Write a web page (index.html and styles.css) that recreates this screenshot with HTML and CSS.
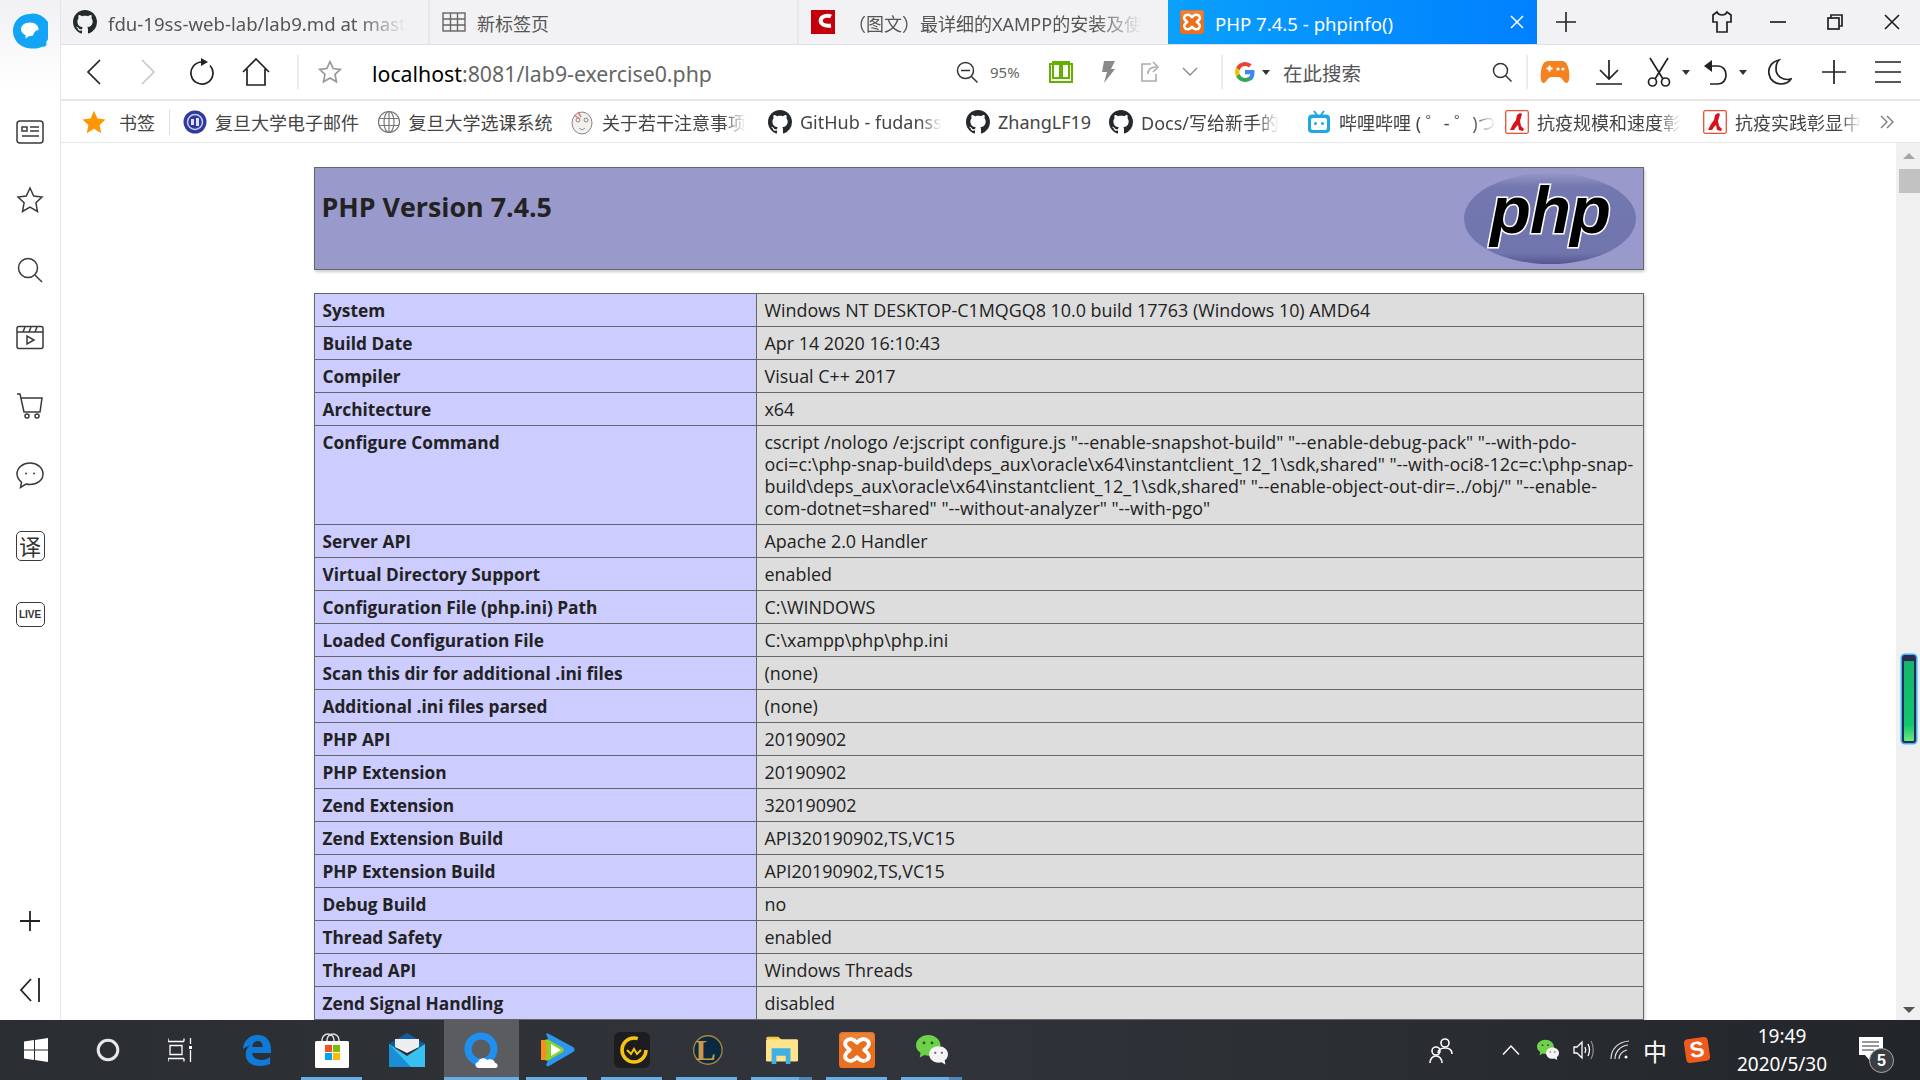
FILE: index.html
```html
<!DOCTYPE html>
<html lang="zh-CN">
<head>
<meta charset="utf-8">
<title>PHP 7.4.5 - phpinfo()</title>
<link rel="stylesheet" href="styles.css">
</head>
<body>
<svg class="defs" width="0" height="0" aria-hidden="true">
  <symbol id="gh" viewBox="0 0 16 16"><path fill="#24292e" d="M8 0C3.58 0 0 3.58 0 8c0 3.54 2.29 6.53 5.47 7.59.4.07.55-.17.55-.38 0-.19-.01-.82-.01-1.49-2.01.37-2.53-.49-2.69-.94-.09-.23-.48-.94-.82-1.13-.28-.15-.68-.52-.01-.53.63-.01 1.08.58 1.23.82.72 1.21 1.87.87 2.33.66.07-.52.28-.87.51-1.07-1.78-.2-3.64-.89-3.64-3.95 0-.87.31-1.59.82-2.15-.08-.2-.36-1.02.08-2.12 0 0 .67-.21 2.2.82.64-.18 1.32-.27 2-.27.68 0 1.36.09 2 .27 1.53-1.04 2.2-.82 2.2-.82.44 1.1.16 1.92.08 2.12.51.56.82 1.27.82 2.15 0 3.07-1.87 3.75-3.65 3.95.29.25.54.73.54 1.48 0 1.07-.01 1.93-.01 2.2 0 .21.15.46.55.38A8.013 8.013 0 0016 8c0-4.42-3.58-8-8-8z"/></symbol>
  <symbol id="xampp" viewBox="0 0 30 30"><rect width="30" height="30" rx="3" fill="#e8701f"/><rect x="1" y="1" width="28" height="7" rx="2" fill="#f09a5c" opacity=".45"/><path fill="none" stroke="#fff" stroke-width="3.200" stroke-linejoin="round" d="M6 7.500c2.500-2.500 6-2 9 1.500 3-3.500 6.500-4 9-1.500 2.500 2.800-.5 5.500-3 7.500 2.500 2 5.500 4.700 3 7.500-2.500 2.500-6 2-9-1.500-3 3.500-6.500 4-9 1.500-2.500-2.800.5-5.500 3-7.500-2.500-2-5.500-4.700-3-7.500z"/></symbol>
  <symbol id="red" viewBox="0 0 24 24"><rect x=".7" y=".7" width="22.600" height="22.600" rx="1.500" fill="#fff" stroke="#e8512f" stroke-width="1.300"/><path fill="#d8121c" d="M15 3l2 1-2 7 1 5 3 3-1 2-4-1-1-5-2 2-2 3H5l3-6 3-4 1-5z"/></symbol>
  <symbol id="caret" viewBox="0 0 8 5"><path fill="#333" d="M0 0h8L4 5z"/></symbol>
  <symbol id="wc" viewBox="0 0 36 34"><path fill="#6fd04a" d="M14 1c7 0 13 4.500 13 11s-6 11-13 11c-1.500 0-2.800-.2-4-.6L5 25l.8-5C2.800 18 1 15.200 1 12 1 5.500 7 1 14 1z"/><circle cx="9.500" cy="9.500" r="1.500" fill="#1d5c1a"/><circle cx="18" cy="9.500" r="1.500" fill="#1d5c1a"/><path fill="#f4f4f4" d="M25 13c5.500 0 10 3.700 10 8.500 0 2.700-1.400 5-3.500 6.500l.7 4.500-4.200-2.400c-1 .2-2 .4-3 .4-5.500 0-10-3.700-10-9s4.500-8.500 10-8.500z"/><circle cx="21.500" cy="20" r="1.200" fill="#666"/><circle cx="28.500" cy="20" r="1.200" fill="#666"/></symbol>
</svg>

<div class="app">
  <aside class="side">
    <svg class="logo" width="36" height="36" viewBox="0 0 38 38"><path fill="#12a5f5" d="M19 1a18 18 0 0 0-5 35.300c5 1.500 13 1.700 18-.8 3.500 1 5.500-2 4-5A18 18 0 0 0 19 1z"/><path fill="#fff" d="M19 10c5.500 0 9.500 3.500 9 8-3.500.5-5 2.500-5.500 5.500-1.500.8-3 1-4.500 1l-4 2.500.5-3.500C11.500 22.500 9.500 20 9.500 17.500 9.500 13 13.500 10 19 10z"/></svg>
    <nav class="side-list">
      <svg width="28" height="26" viewBox="0 0 28 26" class="si"><rect x="1" y="2" width="26" height="22" rx="3"/><rect x="6" y="8" width="5" height="4"/><path d="M14 8h9M14 12h9M6 17h17"/></svg>
      <svg width="28" height="28" viewBox="0 0 28 28" class="si"><path d="M14 2l3.700 8 8.300 1-6.100 5.800 1.600 8.700L14 21l-7.500 4.500 1.600-8.700L2 11l8.300-1z"/></svg>
      <svg width="28" height="28" viewBox="0 0 28 28" class="si"><circle cx="12" cy="12" r="9.500"/><path d="M19 19l7 7"/></svg>
      <svg width="28" height="26" viewBox="0 0 28 26" class="si"><rect x="1" y="1.500" width="26" height="22" rx="2"/><path d="M1 7h26M7 7l2-5M13 7l2-5M19 7l2-5M11 11v8l7-4z"/></svg>
      <svg width="28" height="28" viewBox="0 0 28 28" class="si"><path d="M1 2h3l4 18h16l2-14H5"/><circle cx="11" cy="24" r="2"/><circle cx="21" cy="24" r="2"/></svg>
      <svg width="28" height="28" viewBox="0 0 28 28" class="si"><path d="M14 2c7 0 13 4.500 13 11s-6 10.500-13 10.500c-1.500 0-3-.2-4-.5l-5.500 3.500 1-5.500C3 19 1 16 1 13 1 6.500 7 2 14 2z"/><circle class="dot" cx="10" cy="12.500" r="1"/><circle class="dot" cx="18" cy="12.500" r="1"/></svg>
      <div class="box-icon box-yi">译</div>
      <div class="box-icon box-live">LIVE</div>
    </nav>
    <div class="side-bottom">
      <svg width="24" height="24" viewBox="0 0 24 24" class="si si-dark"><path d="M12 2v20M2 12h20"/></svg>
      <svg width="24" height="28" viewBox="0 0 24 28" class="si si-dark"><path d="M13 3L3 14l10 11M21 2v24"/></svg>
    </div>
  </aside>

  <div class="browser">
    <div class="tabs">
      <div class="tab tab-sep"><svg width="24" height="24"><use href="#gh"/></svg><span class="tab-label latin fade">fdu-19ss-web-lab/lab9.md at mast</span></div>
      <div class="tab tab-sep"><svg width="24" height="22" viewBox="0 0 24 22" class="grid-ico"><rect x="1" y="2" width="22" height="18"/><path d="M1 8h22M1 14h22M8.500 2v18M15.500 2v18"/></svg><span class="tab-label">新标签页</span></div>
      <div class="tab"><svg width="24" height="24" viewBox="0 0 24 24"><rect width="24" height="24" fill="#c4000a"/><path fill="none" stroke="#fff" stroke-width="4" d="M20 6.500c-2-1-8-1.500-10 2.500-1.500 4.500 3 7.500 10 6.500"/></svg><span class="tab-label fade tab-indent">（图文）最详细的XAMPP的安装及使</span></div>
      <div class="tab tab-active"><svg width="24" height="24"><use href="#xampp"/></svg><span class="tab-label latin">PHP 7.4.5 - phpinfo()</span><svg class="tab-x" width="14" height="14" viewBox="0 0 14 14"><path d="M1 1l12 12M13 1L1 13" stroke="#fff" stroke-width="1.500"/></svg></div>
      <div class="tab-tail">
        <svg class="tab-plus" width="22" height="22" viewBox="0 0 22 22"><path d="M11 1v20M1 11h20" stroke="#222" stroke-width="1.600"/></svg>
        <div class="win-btns">
          <svg width="22" height="24" viewBox="0 0 22 24" class="ci shirt"><path d="M6 2l-4 3v7h4v10h10V12h4V5l-4-3c-1 2.500-3 3-5 3S7 4.500 6 2z"/></svg>
          <svg width="16" height="4" viewBox="0 0 16 4" class="ci"><path d="M0 2h16"/></svg>
          <svg width="16" height="16" viewBox="0 0 16 16" class="ci"><rect x="1" y="4" width="11" height="11"/><path d="M4 4V1h11v11h-3"/></svg>
          <svg width="16" height="16" viewBox="0 0 16 16" class="ci"><path d="M1 1l14 14M15 1L1 15"/></svg>
        </div>
      </div>
    </div>

    <div class="toolbar">
      <div class="tool"><svg width="16" height="26" viewBox="0 0 16 26" class="ci"><path d="M14 1L2 13l12 12"/></svg></div>
      <div class="tool"><svg width="16" height="26" viewBox="0 0 16 26" class="ci faint"><path d="M2 1l12 12L2 25"/></svg></div>
      <div class="tool"><svg width="26" height="28" viewBox="0 0 26 28" class="ci"><path d="M21 7.500A11 11 0 1 1 13 4"/><path class="fill" d="M12 0l7 4-7 4z"/></svg></div>
      <div class="tool"><svg width="28" height="28" viewBox="0 0 28 28" class="ci"><path d="M1 14L14 1l13 13M5 11v16h18V11"/></svg></div>
      <div class="tb-sep tb-sep-left"></div>
      <svg class="addr-star" width="24" height="24" viewBox="0 0 28 28"><path d="M14 2l3.700 8 8.300 1-6.100 5.800 1.600 8.700L14 21l-7.500 4.500 1.600-8.700L2 11l8.300-1z" fill="none" stroke="#999" stroke-width="2"/></svg>
      <div class="url"><b>localhost</b>:8081/lab9-exercise0.php</div>
      <div class="zoom-group">
        <svg width="22" height="22" viewBox="0 0 22 22" class="ci thin"><circle cx="9.500" cy="9.500" r="8"/><path d="M5 9.500h9M15.500 15.500l6 6"/></svg>
        <span class="zoom-val">95%</span>
        <svg class="book" width="24" height="22" viewBox="0 0 24 22"><path d="M1 3h22v18H1zM4 1h7v16H4zM13 1h7v16h-7z" fill="none" stroke="#62b000" stroke-width="2"/></svg>
        <svg class="flash" width="16" height="24" viewBox="0 0 16 24"><path fill="#8a8a8a" d="M4 1h11l-4 8h4L4 23l3-11H2z"/></svg>
        <svg class="share" width="20" height="22" viewBox="0 0 20 22"><path d="M11 3H2v17h14v-7M8 13c0-5 3-7 8-7M13 1l5 5-5 5" fill="none" stroke="#aaa" stroke-width="1.600"/></svg>
        <svg class="chev" width="16" height="10" viewBox="0 0 16 10"><path d="M1 1l7 7 7-7" fill="none" stroke="#888" stroke-width="1.400"/></svg>
      </div>
      <div class="tb-sep"></div>
      <div class="search-group">
        <svg width="24" height="24" viewBox="0 0 24 24" class="g"><path d="M21.500 12.200c0-.8-.1-1.500-.2-2.200H12v4.300h5.300c-.2 1.300-1 2.500-2.100 3.200v2.700h3.400c2-1.800 2.900-4.700 2.900-8z" fill="#4285f4"/><path d="M12 22c2.700 0 5-.9 6.600-2.400l-3.400-2.700c-.9.600-2 1-3.200 1-2.500 0-4.600-1.700-5.400-4H3.200v2.700C4.800 19.800 8.100 22 12 22z" fill="#34a853"/><path d="M6.600 13.900c-.4-1.200-.4-2.600 0-3.800V7.400H3.200a10 10 0 0 0 0 9.200z" fill="#fbbc05"/><path d="M12 6c1.500 0 2.700.5 3.800 1.500l2.800-2.900A10 10 0 0 0 3.200 7.400l3.400 2.700C7.400 7.700 9.500 6 12 6z" fill="#ea4335"/></svg>
        <svg class="g-caret" width="8" height="5"><use href="#caret"/></svg>
        <span class="search-text">在此搜索</span>
        <svg class="search-ico ci thin" width="20" height="20" viewBox="0 0 20 20"><circle cx="8.500" cy="8.500" r="7"/><path d="M13.500 13.500l6 6"/></svg>
      </div>
      <div class="tb-sep"></div>
      <div class="tool game"><svg width="30" height="26" viewBox="0 0 30 26"><path fill="#f58220" d="M8 2h14c4 0 6 4 7 10 1 7 0 12-2.500 12-2.500 0-4-5-7.500-6h-8c-3.500 1-5 6-7.500 6S0 19 1 12C2 6 4 2 8 2z"/><path d="M6.500 9.500h6M9.500 6.500v6" stroke="#fff" stroke-width="2"/><circle cx="18" cy="10" r="1.600" fill="#fff"/><circle cx="23" cy="10" r="1.600" fill="#fff"/></svg></div>
      <div class="tool"><svg width="26" height="26" viewBox="0 0 26 26" class="ci"><path d="M13 1v18M4 11l9 9 9-9M0 25h26"/></svg></div>
      <div class="tool tool-split tool-cut"><svg width="24" height="30" viewBox="0 0 24 30" class="ci"><path d="M3 1l13 21M21 1L8 22"/><circle cx="5.500" cy="25" r="4"/><circle cx="18.500" cy="25" r="4"/></svg><svg width="8" height="5"><use href="#caret"/></svg></div>
      <div class="tool tool-split tool-undo"><svg width="24" height="26" viewBox="0 0 24 26" class="ci"><path d="M5 7h9c5 0 8 4 8 9s-3 9-8 9H6"/><path class="fill" d="M8 1v12L0 7z"/></svg><svg width="8" height="5"><use href="#caret"/></svg></div>
      <div class="tool"><svg width="24" height="26" viewBox="0 0 24 26" class="ci"><path d="M11 1C3 3 0 9 1 15c1 6 6 10 12 10 4 0 8-2 10-5-8 2-15-3-15-10 0-4 1-7 3-9z"/></svg></div>
      <div class="tool"><svg width="24" height="24" viewBox="0 0 24 24" class="ci"><path d="M12 0v24M0 12h24"/></svg></div>
      <div class="tool"><svg width="26" height="22" viewBox="0 0 26 22" class="ci"><path d="M0 1h26M0 11h26M0 21h26"/></svg></div>
    </div>

    <div class="bookmarks">
      <svg class="bm-star" width="24" height="24" viewBox="0 0 28 28"><path fill="#ff9500" d="M14 1l4 9 9.500 1-7 6.500 2 9.500-8.500-5-8.500 5 2-9.500-7-6.500L10 10z"/></svg>
      <span class="bm-folder">书签</span>
      <div class="bm-sep"></div>
      <div class="bm bm-mid"><svg width="24" height="24" viewBox="0 0 24 24"><circle cx="12" cy="12" r="11.500" fill="#2f3a9e"/><circle cx="12" cy="12" r="7.500" fill="none" stroke="#c9cdf0" stroke-width="1.500"/><path d="M8 9h3v6H8zM13 8h3v8h-3z" fill="#dfe1f7"/></svg><span class="bm-label">复旦大学电子邮件</span></div>
      <div class="bm bm-mid"><svg width="24" height="24" viewBox="0 0 24 24" fill="none" stroke="#777" stroke-width="1.200"><circle cx="12" cy="12" r="10.500"/><ellipse cx="12" cy="12" rx="5" ry="10.500"/><path d="M12 1.500v21M2 8.500h20M2 15.500h20"/></svg><span class="bm-label">复旦大学选课系统</span></div>
      <div class="bm bm-wide"><svg width="24" height="26" viewBox="0 0 24 26" fill="none" stroke="#888" stroke-width="1"><ellipse cx="12" cy="14" rx="10" ry="11" fill="#f4f0ee"/><circle cx="8" cy="11" r="2"/><circle cx="16" cy="11" r="2"/><path d="M9 19c2 2 4 2 6 0"/><path d="M4 6l6 4M8 3l3 5" stroke="#d88080" stroke-width="1.500"/></svg><span class="bm-label fade">关于若干注意事项</span></div>
      <div class="bm bm-wide"><svg width="24" height="24"><use href="#gh"/></svg><span class="bm-label fade">GitHub - fudanss</span></div>
      <div class="bm bm-short"><svg width="24" height="24"><use href="#gh"/></svg><span class="bm-label">ZhangLF19</span></div>
      <div class="bm bm-wide"><svg width="24" height="24"><use href="#gh"/></svg><span class="bm-label fade">Docs/写给新手的</span></div>
      <div class="bm bm-wide"><svg width="24" height="24" viewBox="0 0 24 24"><path d="M7 1l3 4M17 1l-3 4" stroke="#20a8e0" stroke-width="2"/><rect x="1" y="4.500" width="22" height="18.500" rx="4" fill="#20a8e0"/><rect x="4" y="8" width="16" height="12" rx="2" fill="#fff"/><circle cx="8.500" cy="13.500" r="1.500" fill="#20a8e0"/><circle cx="15.500" cy="13.500" r="1.500" fill="#20a8e0"/></svg><span class="bm-label fade">哔哩哔哩 ( ゜- ゜)つ</span></div>
      <div class="bm bm-wide"><svg width="24" height="24"><use href="#red"/></svg><span class="bm-label fade">抗疫规模和速度彰</span></div>
      <div class="bm bm-last"><svg width="24" height="24"><use href="#red"/></svg><span class="bm-label fade">抗疫实践彰显中</span></div>
      <svg class="bm-more" width="14" height="14" viewBox="0 0 14 14" fill="none" stroke="#777" stroke-width="1.300"><path d="M1 1l6 6-6 6M7 1l6 6-6 6"/></svg>
    </div>

    <div class="viewport">
      <main class="page">
        <header class="php-head">
          <h1>PHP Version 7.4.5</h1>
          <svg class="php-logo" width="172" height="91" viewBox="0 0 172 91">
            <defs>
              <linearGradient id="ph" x1="0" y1="0" x2="0" y2="1"><stop offset="0" stop-color="#9497c6"/><stop offset=".15" stop-color="#7478b0"/><stop offset=".88" stop-color="#7175ae"/><stop offset="1" stop-color="#54568f"/></linearGradient>
            </defs>
            <ellipse cx="86" cy="45.500" rx="86" ry="45.500" fill="url(#ph)"/>
            <text class="php-word" x="86" y="60" text-anchor="middle">php</text>
          </svg>
        </header>
        <table class="info">
          <tbody>
            <tr><th>System</th><td>Windows NT DESKTOP-C1MQGQ8 10.0 build 17763 (Windows 10) AMD64</td></tr>
            <tr><th>Build Date</th><td>Apr 14 2020 16:10:43</td></tr>
            <tr><th>Compiler</th><td>Visual C++ 2017</td></tr>
            <tr><th>Architecture</th><td>x64</td></tr>
            <tr><th>Configure Command</th><td>cscript /nologo /e:jscript configure.js "--enable-snapshot-build" "--enable-debug-pack" "--with-pdo-oci=c:\php-snap-build\deps_aux\oracle\x64\instantclient_12_1\sdk,shared" "--with-oci8-12c=c:\php-snap-build\deps_aux\oracle\x64\instantclient_12_1\sdk,shared" "--enable-object-out-dir=../obj/" "--enable-com-dotnet=shared" "--without-analyzer" "--with-pgo"</td></tr>
            <tr><th>Server API</th><td>Apache 2.0 Handler</td></tr>
            <tr><th>Virtual Directory Support</th><td>enabled</td></tr>
            <tr><th>Configuration File (php.ini) Path</th><td>C:\WINDOWS</td></tr>
            <tr><th>Loaded Configuration File</th><td>C:\xampp\php\php.ini</td></tr>
            <tr><th>Scan this dir for additional .ini files</th><td>(none)</td></tr>
            <tr><th>Additional .ini files parsed</th><td>(none)</td></tr>
            <tr><th>PHP API</th><td>20190902</td></tr>
            <tr><th>PHP Extension</th><td>20190902</td></tr>
            <tr><th>Zend Extension</th><td>320190902</td></tr>
            <tr><th>Zend Extension Build</th><td>API320190902,TS,VC15</td></tr>
            <tr><th>PHP Extension Build</th><td>API20190902,TS,VC15</td></tr>
            <tr><th>Debug Build</th><td>no</td></tr>
            <tr><th>Thread Safety</th><td>enabled</td></tr>
            <tr><th>Thread API</th><td>Windows Threads</td></tr>
            <tr><th>Zend Signal Handling</th><td>disabled</td></tr>
          </tbody>
        </table>
      </main>
      <div class="scrollbar">
        <div class="sb-up"></div>
        <div class="sb-thumb"></div>
        <div class="sb-down"></div>
      </div>
      <div class="battery"><div class="battery-fill"></div></div>
    </div>
  </div>
</div>

<footer class="taskbar">
  <div class="tb-cell"><svg width="24" height="24" viewBox="0 0 24 24"><path fill="#fff" d="M0 3.500l10-1.400V11.500H0zM11 2l13-2v11.500H11zM0 12.500h10v9.400L0 20.500zM11 12.500h13V24l-13-2z"/></svg></div>
  <div class="tb-cell"><svg width="24" height="24" viewBox="0 0 24 24"><circle cx="12" cy="12" r="9.800" fill="none" stroke="#e8e8e8" stroke-width="3"/></svg></div>
  <div class="tb-cell"><svg width="24" height="24" viewBox="0 0 24 24" fill="none" stroke="#fff" stroke-width="1.300"><path d="M0 3.500h16M0 .5v3M16 .5v3M2 7.500h12v9H2zM0 20.500h16M0 20.500v3M16 20.500v3M22.500 0v6M22.500 12v12"/><rect x="21" y="8" width="3" height="3" fill="#fff" stroke="none"/></svg></div>
  <div class="tb-gap"></div>
  <div class="app-cell"><svg width="30" height="32" viewBox="0 0 32 32" preserveAspectRatio="none"><path fill="#0f7ad8" d="M1 15C2 6 9 1 17 1c9 0 14 6 14 15v3H11c0 5 5 7 10 7 3 0 6-1 9-3v7c-3 1-7 2-11 2C10 32 4 28 4 20c0-4 2-7 5-9 -3 1-6 3-8 4zm10-2h11c0-4-2-6-5-6s-6 2-6 6z"/></svg></div>
  <div class="app-cell on"><svg width="36" height="36" viewBox="0 0 36 36"><path d="M8 14V8a6 6 0 0 1 12 0v6M13 14V8a6 6 0 0 1 12 0v6" fill="none" stroke="#ddd" stroke-width="1.500"/><rect x="1" y="9" width="34" height="27" rx="1.500" fill="#fff"/><rect x="11" y="13" width="7" height="7" fill="#f25022"/><rect x="19" y="13" width="7" height="7" fill="#7fba00"/><rect x="11" y="21" width="7" height="7" fill="#00a4ef"/><rect x="19" y="21" width="7" height="7" fill="#ffb900"/></svg></div>
  <div class="app-cell"><svg width="36" height="34" viewBox="0 0 36 34"><path fill="#0c5ea8" d="M0 11L18 0l18 11v4H0z"/><path fill="#eee" d="M6 6h24v8L18 20 6 14z"/><path fill="#37c0f0" d="M0 11l18 12 18-12v23H0z"/><path fill="#1a8fd8" d="M0 11l22 23H0z"/></svg></div>
  <div class="app-cell active on"><svg width="36" height="36" viewBox="0 0 36 36"><circle cx="17" cy="17" r="13" fill="none" stroke="#1f8ff0" stroke-width="7"/><path fill="#fff" d="M15 36c-4 0-5-5-1-6 1-4 7-5 9-2 3-2 8 0 8 3 3 0 4 5 0 5z"/></svg></div>
  <div class="app-cell on"><svg width="36" height="36" viewBox="0 0 36 36"><path fill="#ff8a1f" d="M2 8h6v20H2z"/><path fill="#2e96f0" d="M7 2c1-1 2-1 3 0l24 13c2 1 2 4 0 5L10 34c-1 1-2 0-3-1 5-10 5-21 0-31z"/><path fill="#8ad12a" d="M6 8c2-1 3-1 4 0l14 8c1 1 1 3 0 4l-14 8c-1 1-3 1-4 0 2-6 2-14 0-20z"/><path fill="#fff" d="M12 12l10 6-10 6z"/></svg></div>
  <div class="app-cell on"><svg width="36" height="36" viewBox="0 0 36 36"><rect width="36" height="36" rx="6" fill="#1d1d1f"/><circle cx="20" cy="18" r="12" fill="none" stroke="#f6c411" stroke-width="3.500" stroke-dasharray="60 16"/><path d="M13 18l4 4 3-5 3 5 4-4" fill="none" stroke="#f6c411" stroke-width="2"/></svg></div>
  <div class="app-cell on"><svg width="32" height="34" viewBox="0 0 36 38"><circle cx="19" cy="19" r="16" fill="#0c2a3f" stroke="#a8853f" stroke-width="1.500"/><text class="lol" x="5" y="30">L</text></svg></div>
  <div class="app-cell on split"><svg width="32" height="28" viewBox="0 0 34 34" preserveAspectRatio="none"><path fill="#f6c945" d="M0 3a2 2 0 0 1 2-2h11l4 4H2z"/><rect y="4" width="34" height="27" rx="1.500" fill="#fde38b"/><path fill="#3eb0e6" d="M6 34V15h20v19h-5V24H11v10z"/></svg></div>
  <div class="app-cell on"><svg width="36" height="36"><use href="#xampp"/></svg></div>
  <div class="app-cell on split"><svg width="36" height="32" viewBox="0 0 36 34"><use href="#wc"/></svg></div>

  <div class="tray">
    <div class="tr w50"><svg width="24" height="28" viewBox="0 0 24 28" fill="none" stroke="#fff" stroke-width="1.600"><circle cx="16" cy="7" r="4"/><path d="M9 17c0-3 3-5 7-5s7 2 7 6"/><circle cx="7" cy="15" r="4"/><path d="M1 27c0-4 2.500-7 6-7s6 3 6 7"/></svg></div>
    <div class="tr w38 tr-first"><svg width="18" height="10" viewBox="0 0 18 10" fill="none" stroke="#fff" stroke-width="1.400"><path d="M1 9.500L9 1l8 8.500"/></svg></div>
    <div class="tr w36"><svg width="24" height="22" viewBox="0 0 36 34"><use href="#wc"/></svg></div>
    <div class="tr w36"><svg width="22" height="20" viewBox="0 0 22 20" fill="none" stroke="#fff" stroke-width="1.300"><path d="M1 7h3l5-5v16l-5-5H1zM12 7c1 2 1 4 0 6M15 4c2 4 2 8 0 12"/><path d="M18 1c3 5 3 13 0 18" stroke="#888"/></svg></div>
    <div class="tr w36"><svg width="20" height="20" viewBox="0 0 20 20" fill="none" stroke="#ddd" stroke-width="1.200"><path d="M1 19C1 9 8 2 19 1M5 19c0-7 5-13 13-14M9 19c0-4 3-8 8-9"/><circle cx="16" cy="17" r="1.500" fill="#fff" stroke="none"/></svg></div>
    <div class="tr w34 ime">中</div>
    <div class="tr w50"><div class="sogou">S</div></div>
    <div class="tr clock"><span>19:49</span><span>2020/5/30</span></div>
    <div class="tr notify">
      <svg width="24" height="26" viewBox="0 0 24 26"><path fill="#fff" d="M0 0h24v18H12v7l-6-7H0z"/><path d="M3 5h17M3 9h17M3 13h12" stroke="#333" stroke-width="1.200"/></svg>
      <span class="badge">5</span>
    </div>
  </div>
</footer>
</body>
</html>
```

FILE: styles.css
```css
* { box-sizing: border-box; }
html, body { margin: 0; height: 1080px; overflow: hidden; background: #fff; }
body { display: flex; flex-direction: column; width: 1920px; font-family: "Noto Sans", "Noto Sans CJK SC", sans-serif; color: #444; }
.defs { position: absolute; }
svg { display: block; flex: none; }

.app { display: flex; height: 1020px; }

/* sidebar */
.side { width: 61px; flex: none; display: flex; flex-direction: column; align-items: center; border-right: 1px solid #e6e6e6; background: linear-gradient(#f1f1f4 0, #fff 90px); padding-top: 13px; }
.side-list { display: flex; flex-direction: column; align-items: center; gap: 41.300px; margin-top: 70px; }
.si { fill: none; stroke: #3a3a3a; stroke-width: 1.500; }
.si-dark { stroke: #222; stroke-width: 1.800; }
.si .dot { fill: #3a3a3a; stroke: none; }
.box-icon { display: flex; align-items: center; justify-content: center; border: 1.500px solid #3a3a3a; border-radius: 5px; width: 28px; height: 28px; color: #333; }
.box-yi { font-size: 22px; height: 30px; width: 29px; line-height: 1; }
.box-live { font: 700 10px "Liberation Sans", sans-serif; height: 25px; width: 29px; }
.side-bottom { margin-top: auto; display: flex; flex-direction: column; align-items: center; gap: 43px; padding-bottom: 16px; }

/* tabs */
.browser { flex: 1; min-width: 0; display: flex; flex-direction: column; }
.tabs { height: 45px; display: flex; background: #f2f2f4; border-bottom: 1px solid #e2e2e4; flex: none; }
.tab { width: 369px; height: 44px; display: flex; align-items: center; gap: 11px; padding-left: 12px; font-size: 18px; flex: none; color: #555; }
.tab-sep { border-right: 2px solid #e8e8ea; }
.tab-label { white-space: nowrap; padding-top: 2px; }
.latin { font-size: 18.600px; }
.tab-indent { margin-left: 2px; }
.grid-ico { fill: none; stroke: #666; stroke-width: 1.400; }
.tab-active { background: linear-gradient(90deg, #0aa0fb, #0080ff); color: #fff; position: relative; }
.tab-x { margin-left: auto; margin-right: 13px; }
.tab-tail { flex: 1; display: flex; align-items: center; height: 44px; }
.tab-plus { margin-left: 18px; }
.win-btns { margin-left: auto; display: flex; align-items: center; gap: 41px; padding-right: 20px; }
.shirt { margin-right: -4px; }
.ci { fill: none; stroke: #222; stroke-width: 1.700; }
.ci .fill { fill: #222; stroke: none; }
.ci.thin { stroke: #333; stroke-width: 1.500; }
.ci.faint { stroke: #c8c8c8; }
.fade { -webkit-mask-image: linear-gradient(90deg, #000 84%, transparent); mask-image: linear-gradient(90deg, #000 84%, transparent); }

/* toolbar */
.toolbar { height: 54px; flex: none; display: flex; align-items: center; padding-left: 6px; background: #fff; }
.tool { width: 54px; height: 100%; display: flex; align-items: center; justify-content: center; flex: none; }
.tb-sep { width: 2px; height: 34px; background: #ececec; flex: none; }
.tb-sep-left { margin-left: 14px; }
.addr-star { margin-left: 19px; }
.url { font-size: 21.300px; margin-left: 30px; padding-top: 2px; color: #666; white-space: nowrap; width: 584px; flex: none; }
.url b { font-weight: 400; color: #000; }
.zoom-group { display: flex; align-items: center; width: 265px; flex: none; }
.zoom-val { font-size: 15px; margin-left: 12px; color: #666; }
.book { margin-left: 29px; }
.flash { margin-left: 27px; }
.share { margin-left: 24px; }
.chev { margin-left: 22px; }
.search-group { width: 303px; flex: none; display: flex; align-items: center; padding-left: 10px; }
.g-caret { margin-left: 5px; }
.search-text { font-size: 19.500px; margin-left: 13px; color: #555; }
.search-ico { margin-left: auto; margin-right: 14px; }
.tool-split { justify-content: flex-start; padding-left: 11px; gap: 11px; }
.tool-cut { width: 57px; }
.tool-undo { width: 60px; gap: 11px; }

/* bookmarks */
.bookmarks { height: 44px; flex: none; display: flex; align-items: center; border-top: 2px solid #e6e6e6; border-bottom: 1px solid #e6e6e6; padding-left: 21px; background: #fff; }
.bm-folder { font-size: 18px; margin-left: 13px; }
.bm-sep { width: 1px; height: 26px; background: #e0e0e0; margin: 0 13px 0 14px; }
.bm { display: flex; align-items: center; gap: 8px; flex: none; font-size: 18px; }
.bm-mid { width: 193.500px; }
.bm-wide { width: 198px; }
.bm-short { width: 143px; }
.bm-last { width: 174px; }
.bm-label { white-space: nowrap; color: #444; }
.bm-more { margin-left: 3px; }

/* page */
.viewport { flex: 1; min-height: 0; display: flex; position: relative; overflow: hidden; }
.page { flex: 1; min-width: 0; padding-top: 24px; font-family: "Open Sans", sans-serif; color: #222; }
.php-head { width: 1330px; height: 103px; margin: 0 auto 23px; background: #99c; border: 1px solid #666; box-shadow: 1px 2px 3px #ccc; display: flex; justify-content: space-between; padding: 0 7px; }
.php-head h1 { margin: 17px 0 0; font-size: 26.800px; line-height: 44px; font-weight: 700; color: #222; }
.php-logo { margin-top: 5px; }
.php-word { font: italic 700 67px "Liberation Sans", sans-serif; fill: #000; stroke: #fff; stroke-width: 3px; paint-order: stroke; letter-spacing: -1px; }
.info { width: 1330px; margin: 0 auto; border-collapse: collapse; table-layout: fixed; line-height: 22px; box-shadow: 1px 2px 3px #ccc; }
.info th, .info td { border: 1px solid #666; padding: 5.500px 8px 4.500px; vertical-align: top; text-align: left; overflow-wrap: anywhere; }
.info th { width: 442px; background: #ccf; font-weight: 700; font-size: 17.300px; }
.info td { background: #ddd; font-weight: 400; font-size: 17.900px; padding-top: 5px; padding-bottom: 5px; }

.scrollbar { width: 24px; flex: none; background: #f0f0f0; display: flex; flex-direction: column; align-items: center; padding: 10px 0 7px 2px; }
.sb-up, .sb-down { width: 0; height: 0; border-left: 6px solid transparent; border-right: 6px solid transparent; }
.sb-up { border-bottom: 6px solid #a6a6a6; }
.sb-down { border-top: 6px solid #555; margin-top: auto; }
.sb-thumb { width: 21px; height: 24px; background: #c2c2c2; margin-top: 10px; }
.battery { position: absolute; right: 4px; top: 512px; width: 14px; height: 88px; background: #2a2a55; border-radius: 3px; box-shadow: 0 0 0 1.500px #3fb2f5; padding: 6px 2px 2px; }
.battery-fill { height: 100%; background: linear-gradient(#13b56a, #12c66f 80%, #6fe87c); border-radius: 1px; }

/* taskbar */
.taskbar { height: 60px; flex: none; display: flex; align-items: stretch; background: linear-gradient(90deg, #2a2d31, #31343a 45%, #2b2e33 70%, #22262b); color: #fff; }
.tb-cell { width: 72px; display: flex; align-items: center; justify-content: center; flex: none; }
.tb-gap { width: 3px; flex: none; }
.app-cell { width: 75px; flex: none; display: flex; align-items: center; justify-content: center; position: relative; }
.app-cell.on::after { content: ""; position: absolute; left: 7px; right: 7px; bottom: 0; height: 3px; background: #66aee6; }
.app-cell.active { background: #5a5c60; }
.app-cell.active::after { left: 0; right: 0; }
.app-cell.split::before { content: ""; position: absolute; right: 7px; bottom: 0; width: 13px; height: 3px; background: #4f86b5; z-index: 1; }
.lol { font: 700 34px "Liberation Serif", serif; fill: #c79a4a; }
.tray { margin-left: auto; display: flex; align-items: center; padding-right: 20px; }
.tr { display: flex; align-items: center; justify-content: center; flex: none; height: 100%; }
.w50 { width: 50px; }
.w38 { width: 38px; }
.w36 { width: 36px; }
.w34 { width: 34px; }
.tr-first { margin-left: 26px; }
.ime { font: 400 24px "Noto Sans CJK SC", sans-serif; }
.sogou { width: 24px; height: 24px; background: #ef5a1c; border-radius: 4px; transform: rotate(-8deg); font: 700 22px/24px "Liberation Sans", sans-serif; color: #fff; text-align: center; }
.clock { width: 120px; flex-direction: column; font-size: 19px; line-height: 28px; color: #fff; }
.notify { width: 58px; position: relative; }
.badge { position: absolute; left: 27px; top: 28px; width: 25px; height: 25px; border-radius: 50%; background: #3a3d42; border: 1px solid #aaa; font: 700 16px/23px "Liberation Sans", sans-serif; text-align: center; color: #fff; }
```
